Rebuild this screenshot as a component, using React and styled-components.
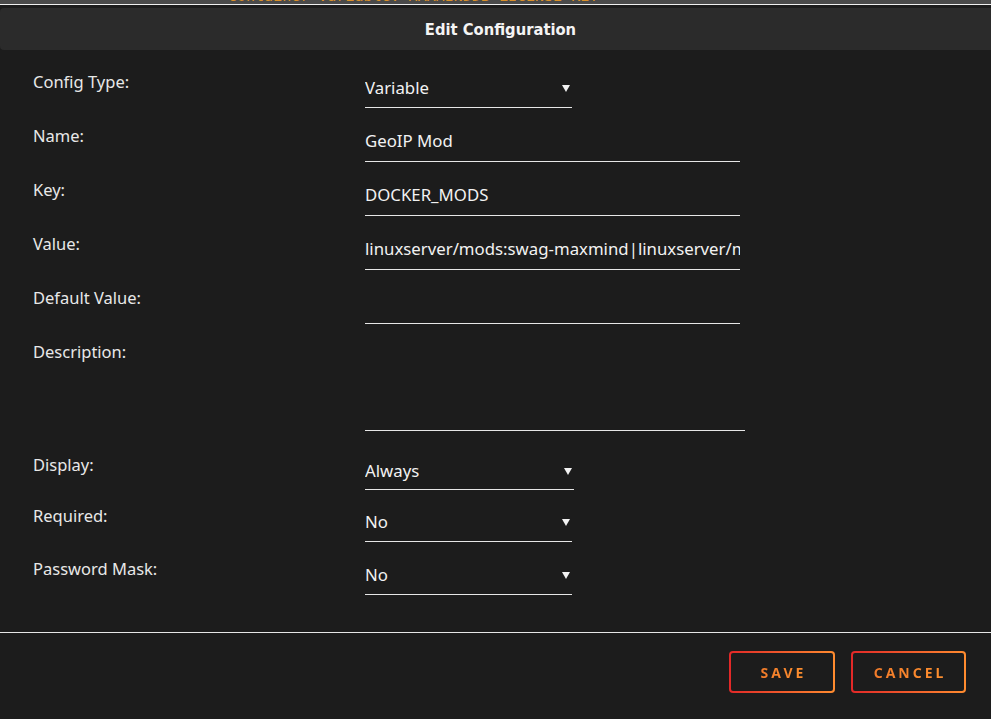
import React from 'react'
import styled, { createGlobalStyle } from 'styled-components';

const Global = createGlobalStyle`
html, body {
  margin: 0;
  padding: 0;
  background: #1c1c1c;
  font-family: "Noto Sans", "Open Sans", sans-serif;
}
`;

const Page = styled.div`
width: 991px;
height: 719px;
overflow: hidden;
background: #1c1c1c;
display: flex;
flex-direction: column;
`;

const BackStrip = styled.div`
height: 4px;
overflow: hidden;
background: #4a4a4a;
border-bottom: 1px solid #f0f0f0;
padding-left: 228px;
`;

const BackText = styled.div`
margin-top: -13px;
font-family: "DejaVu Sans Mono", monospace;
font-size: 15px;
line-height: 18px;
color: #d9902a;
white-space: nowrap;
`;

const Header = styled.div`
margin-top: 3px;
height: 42px;
padding-left: 10px;
background: #2b2b2b;
border-radius: 4px 0 0 4px;
display: flex;
align-items: center;
justify-content: center;
font-family: "DejaVu Sans Condensed", "DejaVu Sans", sans-serif;
font-weight: 700;
font-size: 16.4px;
color: #f4f4f4;
`;

const Form = styled.div`
display: flex;
flex-direction: column;
padding: 22px 0 0 33px;
flex: 1;
`;

const Row = styled.div`
display: grid;
grid-template-columns: 332px auto;
align-items: start;
margin-bottom: ${({gap})=>gap ?? 18}px;
`;

const Label = styled.div`
font-size: 16.5px;
line-height: 20px;
color: #e8e8e8;
`;

const Field = styled.div`
position: relative;
width: ${({w})=>w}px;
height: ${({h})=>h ?? 35}px;
margin-top: 1px;
padding-top: 3px;
box-sizing: border-box;
border-bottom: 1px solid #e6e6e6;
font-size: 16.8px;
line-height: 22px;
color: #f2f2f2;
white-space: nowrap;
overflow: hidden;
`;

const Select = styled(Field)`
padding-top: 4px;
&::after{
  content: '';
  position: absolute;
  right: 2px;
  top: 12px;
  border-left: 4px solid transparent;
  border-right: 4px solid transparent;
  border-top: 7px solid #f2f2f2;
}
`;

const Footer = styled.div`
border-top: 1px solid #e6e6e6;
height: 87px;
display: flex;
justify-content: flex-end;
align-items: flex-start;
gap: 16px;
padding: 18px 25px 0 0;
box-sizing: border-box;
`;

const Button = styled.button`
height: 42px;
width: ${({w})=>w}px;
border: 2px solid transparent;
border-radius: 4px;
background: linear-gradient(#1c1c1c, #1c1c1c) padding-box,
  linear-gradient(90deg, #e22828, #ff8c2f) border-box;
font-family: "Noto Sans", sans-serif;
font-weight: 700;
font-size: 14px;
letter-spacing: 3px;
cursor: pointer;
& span{
  background: linear-gradient(90deg, #f07a2a, #ff902f);
  -webkit-background-clip: text;
  background-clip: text;
  color: transparent;
  padding-left: 3px;
}
`;

export default function App() {
  return (
    <Page>
      <Global />
      <BackStrip>
        <BackText>Container Variable: MAXMINDDB_LICENSE_KEY</BackText>
      </BackStrip>
      <Header>Edit Configuration</Header>
      <Form>
        <Row>
          <Label>Config Type:</Label>
          <Select w={207}>Variable</Select>
        </Row>
        <Row>
          <Label>Name:</Label>
          <Field w={375}>GeoIP Mod</Field>
        </Row>
        <Row>
          <Label>Key:</Label>
          <Field w={375}>DOCKER_MODS</Field>
        </Row>
        <Row>
          <Label>Value:</Label>
          <Field w={375}>linuxserver/mods:swag-maxmind|linuxserver/mods:swag-dbip</Field>
        </Row>
        <Row>
          <Label>Default Value:</Label>
          <Field w={375}></Field>
        </Row>
        <Row gap={24}>
          <Label>Description:</Label>
          <Field w={380} h={88}></Field>
        </Row>
        <Row gap={16}>
          <Label>Display:</Label>
          <Select w={209} h={34}>Always</Select>
        </Row>
        <Row gap={17}>
          <Label>Required:</Label>
          <Select w={207}>No</Select>
        </Row>
        <Row gap={0}>
          <Label>Password Mask:</Label>
          <Select w={207}>No</Select>
        </Row>
      </Form>
      <Footer>
        <Button w={106}><span>SAVE</span></Button>
        <Button w={115}><span>CANCEL</span></Button>
      </Footer>
    </Page>
  )
}
